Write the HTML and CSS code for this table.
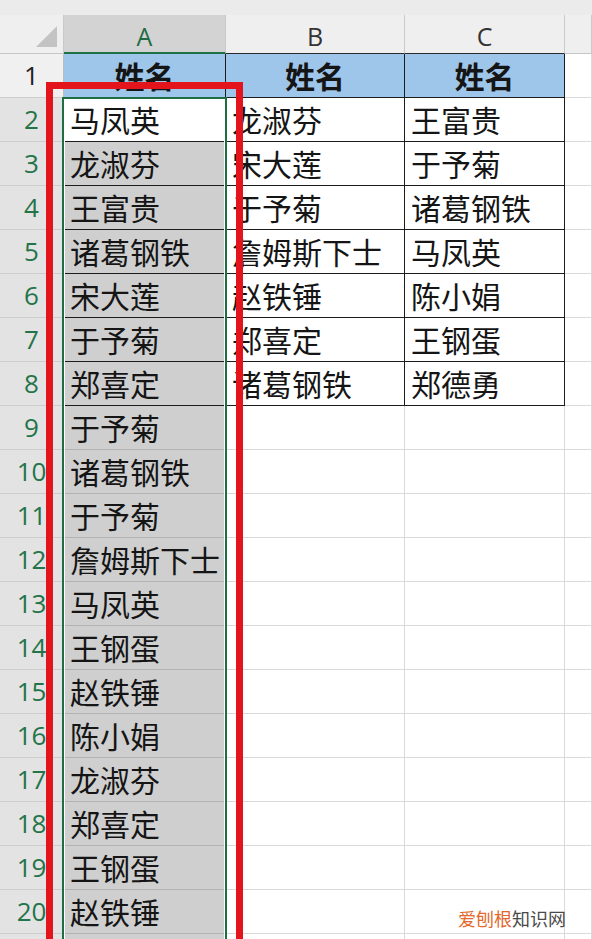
FILE: index.html
```html
<!DOCTYPE html>
<html lang="zh">
<head>
<meta charset="utf-8">
<title>Sheet</title>
<link rel="stylesheet" href="styles.css">
</head>
<body>
<div class="sheet">
  <div class="grid head">
    <div class="corner"><svg width="21" height="21" viewBox="0 0 21 21"><polygon points="0,21 21,21 21,0" fill="#c3c3c3"/></svg></div>
    <div class="ch sel">A</div>
    <div class="ch tb">B</div>
    <div class="ch tb">C</div>
    <div class="ch"></div>
  </div>
  <div class="grid row"><div class="rh n">1</div><div class="c t blue">姓名</div><div class="c t blue">姓名</div><div class="c t blue">姓名</div><div class="c"></div></div>
  <div class="grid row"><div class="rh">2</div><div class="c t">马凤英</div><div class="c t">龙淑芬</div><div class="c t">王富贵</div><div class="c"></div></div>
  <div class="grid row"><div class="rh">3</div><div class="c t g">龙淑芬</div><div class="c t">宋大莲</div><div class="c t">于予菊</div><div class="c"></div></div>
  <div class="grid row"><div class="rh">4</div><div class="c t g">王富贵</div><div class="c t">于予菊</div><div class="c t">诸葛钢铁</div><div class="c"></div></div>
  <div class="grid row"><div class="rh">5</div><div class="c t g">诸葛钢铁</div><div class="c t">詹姆斯下士</div><div class="c t">马凤英</div><div class="c"></div></div>
  <div class="grid row"><div class="rh">6</div><div class="c t g">宋大莲</div><div class="c t">赵铁锤</div><div class="c t">陈小娟</div><div class="c"></div></div>
  <div class="grid row"><div class="rh">7</div><div class="c t g">于予菊</div><div class="c t">郑喜定</div><div class="c t">王钢蛋</div><div class="c"></div></div>
  <div class="grid row"><div class="rh">8</div><div class="c t g">郑喜定</div><div class="c t">诸葛钢铁</div><div class="c t">郑德勇</div><div class="c"></div></div>
  <div class="grid row"><div class="rh">9</div><div class="c g">于予菊</div><div class="c"></div><div class="c"></div><div class="c"></div></div>
  <div class="grid row"><div class="rh">10</div><div class="c g">诸葛钢铁</div><div class="c"></div><div class="c"></div><div class="c"></div></div>
  <div class="grid row"><div class="rh">11</div><div class="c g">于予菊</div><div class="c"></div><div class="c"></div><div class="c"></div></div>
  <div class="grid row"><div class="rh">12</div><div class="c g">詹姆斯下士</div><div class="c"></div><div class="c"></div><div class="c"></div></div>
  <div class="grid row"><div class="rh">13</div><div class="c g">马凤英</div><div class="c"></div><div class="c"></div><div class="c"></div></div>
  <div class="grid row"><div class="rh">14</div><div class="c g">王钢蛋</div><div class="c"></div><div class="c"></div><div class="c"></div></div>
  <div class="grid row"><div class="rh">15</div><div class="c g">赵铁锤</div><div class="c"></div><div class="c"></div><div class="c"></div></div>
  <div class="grid row"><div class="rh">16</div><div class="c g">陈小娟</div><div class="c"></div><div class="c"></div><div class="c"></div></div>
  <div class="grid row"><div class="rh">17</div><div class="c g">龙淑芬</div><div class="c"></div><div class="c"></div><div class="c"></div></div>
  <div class="grid row"><div class="rh">18</div><div class="c g">郑喜定</div><div class="c"></div><div class="c"></div><div class="c"></div></div>
  <div class="grid row"><div class="rh">19</div><div class="c g">王钢蛋</div><div class="c"></div><div class="c"></div><div class="c"></div></div>
  <div class="grid row"><div class="rh">20</div><div class="c g">赵铁锤</div><div class="c"></div><div class="c"></div><div class="c"></div></div>
  <div class="grid row"><div class="rh"></div><div class="c g"></div><div class="c"></div><div class="c"></div><div class="c"></div></div>

  <div class="selbox"></div>
  <div class="redbox"></div>
  <div class="wm"><span class="o">爱刨根</span>知识网</div>
</div>
</body>
</html>
```

FILE: styles.css
```css
html, body {
  margin: 0;
  padding: 0;
  background: #ffffff;
  overflow: hidden;
}
.sheet {
  position: relative;
  width: 592px;
  height: 939px;
  overflow: hidden;
  font-family: "Noto Sans CJK SC", "Noto Sans", sans-serif;
}
.grid {
  display: grid;
  grid-template-columns: 64px 162px 179px 160px 1fr;
}
.head {
  padding-top: 15px;
  background: #ebebeb;
}
.corner, .ch {
  box-sizing: border-box;
  height: 39px;
  background: #efefef;
  border-right: 1px solid #c9c9c9;
  border-bottom: 1px solid #c6c6c6;
}
.corner {
  display: flex;
  justify-content: flex-end;
  align-items: flex-end;
  padding: 0 6px 6px 0;
}
.corner svg { display: block; }
.ch {
  display: flex;
  justify-content: center;
  align-items: center;
  padding-top: 4px;
  font-family: "Open Sans", "Noto Sans", sans-serif;
  font-size: 25px;
  color: #333333;
}
.ch.sel {
  background: #d3d3d3;
  color: #1f6b43;
  border-bottom: 2px solid #1f7145;
}
.ch.tb {
  border-bottom-color: #2a2a2a;
}
.row > div {
  box-sizing: border-box;
  height: 44px;
}
.rh {
  display: flex;
  justify-content: center;
  align-items: center;
  padding-bottom: 2px;
  background: #e3e3e3;
  color: #24744a;
  font-family: "Open Sans", "Noto Sans", sans-serif;
  font-size: 26px;
  border-right: 1px solid #bdbdbd;
  border-bottom: 1px solid #cdcdcd;
}
.rh.n {
  background: #f0f0f0;
  color: #222222;
}
.c {
  display: flex;
  align-items: center;
  padding: 0 0 1px 6px;
  font-size: 30px;
  line-height: 1;
  color: #151515;
  white-space: nowrap;
  overflow: hidden;
  border-right: 1px solid #dadada;
  border-bottom: 1px solid #dadada;
}
.c.g {
  background: #cfcfcf;
  border-bottom-color: #b4b4b4;
  border-right-color: #b4b4b4;
}
.c.t {
  border-right-color: #1c1c1c;
  border-bottom-color: #1c1c1c;
}
.c.blue {
  background: #9ec5ea;
  justify-content: center;
  padding-left: 0;
  font-weight: 700;
}
.selbox {
  position: absolute;
  left: 62px;
  top: 97px;
  width: 165px;
  height: 900px;
  box-sizing: border-box;
  border: 2px solid #1d6e42;
  box-shadow: inset 0 0 0 1px #ffffff;
}
.redbox {
  position: absolute;
  left: 46px;
  top: 82px;
  width: 197px;
  height: 920px;
  box-sizing: border-box;
  border: 7px solid #e3141c;
}
.wm {
  position: absolute;
  left: 458px;
  top: 907px;
  font-size: 18px;
  line-height: 22px;
  color: #4a4a4a;
  white-space: nowrap;
}
.wm .o {
  color: #e26a2c;
}
```
